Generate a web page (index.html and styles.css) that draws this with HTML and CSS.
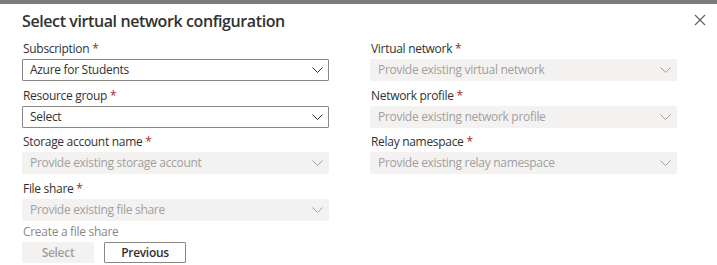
FILE: index.html
```html
<!DOCTYPE html>
<html>
<head>
<meta charset="utf-8">
<link rel="stylesheet" href="styles.css">
</head>
<body>
<div class="topbar"></div>
<div class="panel">
  <div class="header">
    <h1 class="title">Select virtual network configuration</h1>
    <button class="close" aria-label="Close">
      <svg width="12" height="12" viewBox="0 0 12 12"><path d="M1 1 L11 11 M11 1 L1 11" stroke="#605e5c" stroke-width="1.1" fill="none"/></svg>
    </button>
  </div>
  <div class="columns">
    <div class="col">
      <div class="field">
        <div class="label">Subscription <span class="req">*</span></div>
        <div class="dropdown"><span>Azure for Students</span><svg class="chev" width="11" height="6" viewBox="0 0 11 6"><path d="M0.5 0.5 L5.5 5.5 L10.5 0.5" stroke="#323130" stroke-width="1" fill="none"/></svg></div>
      </div>
      <div class="field">
        <div class="label">Resource group <span class="req">*</span></div>
        <div class="dropdown"><span>Select</span><svg class="chev" width="11" height="6" viewBox="0 0 11 6"><path d="M0.5 0.5 L5.5 5.5 L10.5 0.5" stroke="#323130" stroke-width="1" fill="none"/></svg></div>
      </div>
      <div class="field">
        <div class="label">Storage account name <span class="req">*</span></div>
        <div class="dropdown disabled"><span>Provide existing storage account</span><svg class="chev" width="11" height="6" viewBox="0 0 11 6"><path d="M0.5 0.5 L5.5 5.5 L10.5 0.5" stroke="#a19f9d" stroke-width="1" fill="none"/></svg></div>
      </div>
      <div class="field last">
        <div class="label">File share <span class="req">*</span></div>
        <div class="dropdown disabled"><span>Provide existing file share</span><svg class="chev" width="11" height="6" viewBox="0 0 11 6"><path d="M0.5 0.5 L5.5 5.5 L10.5 0.5" stroke="#a19f9d" stroke-width="1" fill="none"/></svg></div>
      </div>
      <div class="link">Create a file share</div>
      <div class="buttons">
        <button class="btn btn-disabled">Select</button>
        <button class="btn btn-default">Previous</button>
      </div>
    </div>
    <div class="col">
      <div class="field">
        <div class="label">Virtual network <span class="req">*</span></div>
        <div class="dropdown disabled"><span>Provide existing virtual network</span><svg class="chev" width="11" height="6" viewBox="0 0 11 6"><path d="M0.5 0.5 L5.5 5.5 L10.5 0.5" stroke="#a19f9d" stroke-width="1" fill="none"/></svg></div>
      </div>
      <div class="field">
        <div class="label">Network profile <span class="req">*</span></div>
        <div class="dropdown disabled"><span>Provide existing network profile</span><svg class="chev" width="11" height="6" viewBox="0 0 11 6"><path d="M0.5 0.5 L5.5 5.5 L10.5 0.5" stroke="#a19f9d" stroke-width="1" fill="none"/></svg></div>
      </div>
      <div class="field">
        <div class="label">Relay namespace <span class="req">*</span></div>
        <div class="dropdown disabled"><span>Provide existing relay namespace</span><svg class="chev" width="11" height="6" viewBox="0 0 11 6"><path d="M0.5 0.5 L5.5 5.5 L10.5 0.5" stroke="#a19f9d" stroke-width="1" fill="none"/></svg></div>
      </div>
    </div>
  </div>
</div>
</body>
</html>
```
FILE: styles.css
```css
* { box-sizing: border-box; }
html, body { margin: 0; padding: 0; background: #fff; }
body {
  font-family: "Open Sans", "Noto Sans", sans-serif;
  font-size: 12px;
  letter-spacing: -0.3px;
  color: #323130;
  width: 717px;
  height: 265px;
  overflow: hidden;
}
.topbar { height: 4px; background: #7b7b7b; }
.panel { padding: 0 0 0 22px; }
.header {
  display: flex;
  justify-content: space-between;
  align-items: flex-start;
  height: 36px;
}
.title {
  margin: 5px 0 0 0;
  font-size: 16px;
  font-weight: 600;
  line-height: 24px;
  color: #323130;
  letter-spacing: -0.4px;
}
.close {
  border: 0;
  background: none;
  padding: 0;
  margin: 10px 11px 0 0;
  width: 12px;
  height: 12px;
  display: flex;
}
.columns {
  display: grid;
  grid-template-columns: 307px 307px;
  column-gap: 41px;
}
.col { display: flex; flex-direction: column; }
.field { display: flex; flex-direction: column; margin-bottom: 6px; }
.field:nth-child(2) { margin-bottom: 5px; }
.field.last { margin-bottom: 0; }
.label {
  line-height: 18px;
  height: 18px;
  margin-bottom: 1px;
  padding-left: 1px;
}
.req { color: #a4262c; }
.dropdown {
  height: 22px;
  border: 1px solid #8a8886;
  border-radius: 1px;
  display: flex;
  align-items: center;
  justify-content: space-between;
  padding: 0 5px 0 7px;
  line-height: 20px;
}
.dropdown.disabled {
  border-color: #f3f2f1;
  background: #f3f2f1;
  color: #a19f9d;
}
.chev { flex: none; }
.link {
  color: #8a8886;
  line-height: 18px;
  height: 18px;
  margin-top: 2px;
  margin-bottom: 1px;
  padding-left: 1px;
}
.buttons { display: flex; gap: 10px; }
.btn {
  font-family: "Open Sans", "Noto Sans", sans-serif;
  font-size: 12px;
  font-weight: 600;
  letter-spacing: -0.3px;
  height: 21px;
  padding: 0;
  border-radius: 1px;
  line-height: 19px;
}
.btn-disabled {
  width: 72px;
  background: #f3f2f1;
  border: 1px solid #f3f2f1;
  color: #a19f9d;
}
.btn-default {
  width: 82px;
  background: #fff;
  border: 1px solid #8a8886;
  color: #323130;
}
```
